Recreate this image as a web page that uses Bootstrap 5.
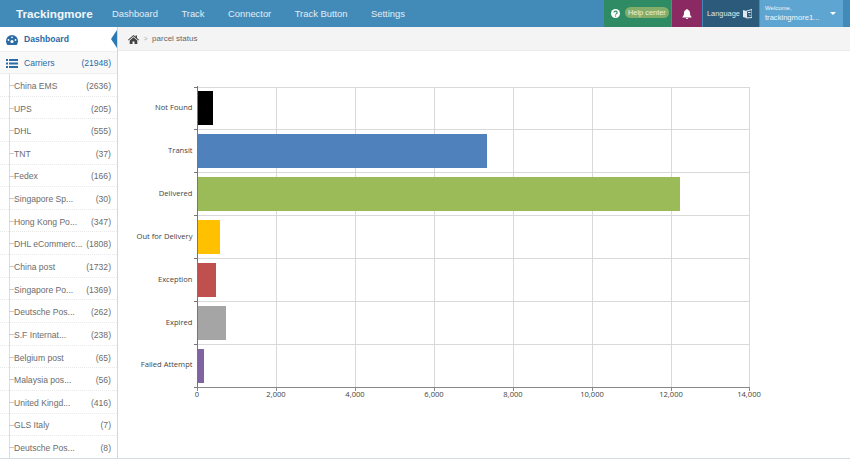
<!DOCTYPE html>
<html lang="en"><head><meta charset="utf-8"><title>Tracking</title>
<link href="https://cdn.jsdelivr.net/npm/bootstrap@5.3.0/dist/css/bootstrap.min.css" rel="stylesheet">
<style>
html,body{height:459px;overflow:hidden}
body{font-family:"Liberation Sans",Arial,sans-serif;background:#fff;color:#555;font-size:9px}
.tm-top{height:27px;background:#428bb9;color:#fff}
.tm-brand{font-size:11.7px;font-weight:700;color:#f2f7fa;width:112px;padding-left:16px;text-decoration:none;line-height:27px}
.tm-link{font-size:9.4px;color:#e2edf4;text-decoration:none;line-height:25px;white-space:nowrap}
.tm-links{gap:23.5px}
.tm-right{margin-right:7px;height:27px}
.tm-help{width:67px;background:#2e8b64;gap:5px;padding-left:7px}
.tm-pill{background:#85ad6a;color:#e9f2e3;font-size:7.4px;border-radius:6px;line-height:11px;padding:0 3px;margin-bottom:3px;white-space:nowrap}
.tm-bell{width:30px;background:#8b2a62;margin-left:1px}
.tm-lang{width:56px;background:#2c5a7a;margin-left:1px;font-size:7.4px;color:#dfe8ee;padding-left:4px;gap:3px}
.tm-user{width:83px;background:#5fa5d2;margin-left:1px;padding-left:5px;position:relative;color:#f0f6fb}
.tm-welcome{font-size:6px;line-height:7px;padding-top:5px}
.tm-name{font-size:7.6px;line-height:11px;white-space:nowrap}
.tm-caret{position:absolute;right:7px;top:12px;width:0;height:0;border-left:3px solid transparent;border-right:3px solid transparent;border-top:3px solid #fff}
.tm-main{height:432px}
.tm-side{width:118px;border-right:1px solid #cfd8dd;border-bottom:1px solid #d5dde2;flex:none;position:relative;height:432px;overflow:hidden}
.tm-dash{height:24px;color:#2a6aa5;font-weight:700;font-size:8.6px;padding:1px 0 0 6px;gap:6px;background:#fff;position:relative}
.tm-arrow{position:absolute;right:0;top:3px;width:0;height:0;border-top:9px solid transparent;border-bottom:9px solid transparent;border-right:6px solid #2a7ab5}
.tm-carr{height:23px;background:#f9f9f9;border-top:1px solid #f0f0f0;border-bottom:1px solid #eee;color:#2a6aa5;padding:1px 6px 0 6px;gap:6px;font-size:8.6px}
.tm-sub{position:relative;height:22.65px;padding:3px 6px 0 14px;border-bottom:1px dotted #e8e8e8;color:#6c6c6c;font-size:8.6px;white-space:nowrap}
.tm-sub::before{content:"";position:absolute;left:9px;top:0;bottom:-1px;border-left:1px solid #d6dfe5}
.tm-sub::after{content:"";position:absolute;left:9px;top:11px;width:5px;border-top:1px solid #c9c9c9}
.tm-content{min-width:0}
.tm-crumb{height:24px;background:#f4f4f4;border-bottom:1px solid #ebebeb;padding:1px 0 0 10px;font-size:8px;color:#666;gap:4.5px}
.tm-sep{color:#aaa;font-size:7px}
.tm-bottom{height:408px;border-bottom:1px solid #d5dde2}
.tm-chart{display:block}
.tm-chart text{font-family:"Open Sans",sans-serif;font-size:7.6px;fill:#444}
</style></head><body>
<nav class="tm-top d-flex align-items-center">
  <a class="tm-brand" href="#">Trackingmore</a>
  <div class="tm-links d-flex">
    <a class="tm-link" href="#">Dashboard</a><a class="tm-link" href="#">Track</a><a class="tm-link" href="#">Connector</a><a class="tm-link" href="#">Track Button</a><a class="tm-link" href="#">Settings</a>
  </div>
  <div class="tm-right ms-auto d-flex">
    <div class="tm-help d-flex align-items-center">
      <svg width="9" height="9" viewBox="0 0 10 10"><circle cx="5" cy="5" r="5" fill="#fff"/><path d="M3.3 4a1.8 1.6 0 1 1 2.6 1.4c-.7.4-.9.6-.9 1.1" fill="none" stroke="#2e8b64" stroke-width="1.2"/><rect x="4.4" y="7.2" width="1.2" height="1.2" fill="#2e8b64"/></svg>
      <span class="tm-pill">Help center</span>
    </div>
    <div class="tm-bell d-flex align-items-center justify-content-center">
      <svg width="10" height="10" viewBox="0 0 10 10"><path d="M5 0c.5 0 .8.4.8.8C7.300 1.200 8 2.400 8 4c0 2 .6 3 1.500 3.800V8.500H.5v-.7C1.400 7 2 6 2 4c0-1.600.7-2.800 2.200-3.200C4.200.4 4.500 0 5 0zM3.800 9h2.400a1.200 1 0 0 1-2.400 0z" fill="#fff"/></svg>
    </div>
    <div class="tm-lang d-flex align-items-center">
      <span>Language</span>
      <svg width="9" height="10" viewBox="0 0 9 10"><path d="M0 1l3.500 1v7L0 8z" fill="#dfe8ee"/><path d="M3.500 2L9 .5v8L3.500 9z" fill="none" stroke="#dfe8ee"/><path d="M5 3.500h2.500M6 5.500l1.500 1.500" stroke="#dfe8ee"/></svg>
    </div>
    <div class="tm-user">
      <div class="tm-welcome">Welcome,</div>
      <div class="tm-name">trackingmore1...</div>
      <span class="tm-caret"></span>
    </div>
  </div>
</nav>
<div class="tm-main d-flex">
  <aside class="tm-side">
    <div class="tm-dash d-flex align-items-center">
      <svg width="12" height="10" viewBox="0 0 12 10"><path d="M6 0a6 6 0 0 1 6 6c0 1.500-.5 2.800-1.300 4H1.300C.5 8.800 0 7.500 0 6a6 6 0 0 1 6-6z" fill="#2a6aa5"/><circle cx="6" cy="6.500" r="1.600" fill="#fff"/><circle cx="2.500" cy="5" r=".9" fill="#fff"/><circle cx="9.500" cy="5" r=".9" fill="#fff"/><circle cx="6" cy="2.300" r=".9" fill="#fff"/></svg>
      <span>Dashboard</span><i class="tm-arrow"></i>
    </div>
    <div class="tm-carr d-flex align-items-center">
      <svg width="12" height="9" viewBox="0 0 12 9" fill="#2a6aa5"><rect y="0" width="2" height="2"/><rect x="3" y="0" width="9" height="2"/><rect y="3.500" width="2" height="2"/><rect x="3" y="3.500" width="9" height="2"/><rect y="7" width="2" height="2"/><rect x="3" y="7" width="9" height="2"/></svg>
      <span>Carriers</span><span class="ms-auto">(21948)</span>
    </div>
    <div class="tm-sub d-flex align-items-center justify-content-between"><span>China EMS</span><span>(2636)</span></div>
    <div class="tm-sub d-flex align-items-center justify-content-between"><span>UPS</span><span>(205)</span></div>
    <div class="tm-sub d-flex align-items-center justify-content-between"><span>DHL</span><span>(555)</span></div>
    <div class="tm-sub d-flex align-items-center justify-content-between"><span>TNT</span><span>(37)</span></div>
    <div class="tm-sub d-flex align-items-center justify-content-between"><span>Fedex</span><span>(166)</span></div>
    <div class="tm-sub d-flex align-items-center justify-content-between"><span>Singapore Sp...</span><span>(30)</span></div>
    <div class="tm-sub d-flex align-items-center justify-content-between"><span>Hong Kong Po...</span><span>(347)</span></div>
    <div class="tm-sub d-flex align-items-center justify-content-between"><span>DHL eCommerc...</span><span>(1808)</span></div>
    <div class="tm-sub d-flex align-items-center justify-content-between"><span>China post</span><span>(1732)</span></div>
    <div class="tm-sub d-flex align-items-center justify-content-between"><span>Singapore Po...</span><span>(1369)</span></div>
    <div class="tm-sub d-flex align-items-center justify-content-between"><span>Deutsche Pos...</span><span>(262)</span></div>
    <div class="tm-sub d-flex align-items-center justify-content-between"><span>S.F Internat...</span><span>(238)</span></div>
    <div class="tm-sub d-flex align-items-center justify-content-between"><span>Belgium post</span><span>(65)</span></div>
    <div class="tm-sub d-flex align-items-center justify-content-between"><span>Malaysia pos...</span><span>(56)</span></div>
    <div class="tm-sub d-flex align-items-center justify-content-between"><span>United Kingd...</span><span>(416)</span></div>
    <div class="tm-sub d-flex align-items-center justify-content-between"><span>GLS Italy</span><span>(7)</span></div>
    <div class="tm-sub d-flex align-items-center justify-content-between"><span>Deutsche Pos...</span><span>(8)</span></div>
  </aside>
  <main class="tm-content flex-grow-1">
    <div class="tm-crumb d-flex align-items-center">
      <svg width="11" height="9" viewBox="0 0 11 9"><path d="M5.500 0L7.500 1.700V.5H9v2.500L11 4.700l-.6.7L5.500 1.300.6 5.400 0 4.700zM1.700 5.400L5.500 2.200l3.800 3.200V9H6.500V6.500h-2V9H1.700z" fill="#444"/></svg>
      <span class="tm-sep">&gt;</span><span>parcel status</span>
    </div>
    <div class="tm-bottom">
      <svg class="tm-chart" width="732" height="407" viewBox="118 51 732 407">
        <g stroke="#d9d9d9" fill="none">
          <path d="M276.500 87v300M355.500 87v300M434.500 87v300M513.500 87v300M592.500 87v300M671.500 87v300M749.500 87v300"/>
          <path d="M197 87.500h553M197 129.500h553M197 172.500h553M197 215.500h553M197 258.500h553M197 301.500h553M197 344.500h553"/>
        </g>
        <rect x="197" y="91" width="16" height="34" fill="#000"/>
        <rect x="197" y="134" width="290" height="34" fill="#4f81bd"/>
        <rect x="197" y="177" width="483" height="34" fill="#9bbb59"/>
        <rect x="197" y="220" width="23" height="34" fill="#ffc000"/>
        <rect x="197" y="263" width="19" height="34" fill="#c0504d"/>
        <rect x="197" y="306" width="29" height="34" fill="#a5a5a5"/>
        <rect x="197" y="349" width="7" height="34" fill="#8064a2"/>
        <path d="M197.500 86v302M194 87.500h3M194 129.500h3M194 172.500h3M194 215.500h3M194 258.500h3M194 301.500h3M194 344.500h3M194 387.500h3" stroke="#777" fill="none"/>
        <path d="M197 387.500h553M197.500 388v3M276.500 388v3M355.500 388v3M434.500 388v3M513.500 388v3M592.500 388v3M671.500 388v3M749.500 388v3" stroke="#888" fill="none"/>
        <g text-anchor="end">
          <text x="192.500" y="110">Not Found</text>
          <text x="192.500" y="153">Transit</text>
          <text x="192.500" y="196">Delivered</text>
          <text x="192.500" y="239">Out for Delivery</text>
          <text x="192.500" y="282">Exception</text>
          <text x="192.500" y="325">Expired</text>
          <text x="192.500" y="367">Failed Attempt</text>
        </g>
        <g text-anchor="middle">
          <text x="197" y="397">0</text>
          <text x="276" y="397">2,000</text>
          <text x="355" y="397">4,000</text>
          <text x="434" y="397">6,000</text>
          <text x="513" y="397">8,000</text>
          <text x="592" y="397">10,000</text>
          <text x="671" y="397">12,000</text>
          <text x="749" y="397">14,000</text>
        </g>
      </svg>
    </div>
  </main>
</div>
<script src="https://cdn.jsdelivr.net/npm/bootstrap@5.3.0/dist/js/bootstrap.bundle.min.js"></script>
</body></html>
